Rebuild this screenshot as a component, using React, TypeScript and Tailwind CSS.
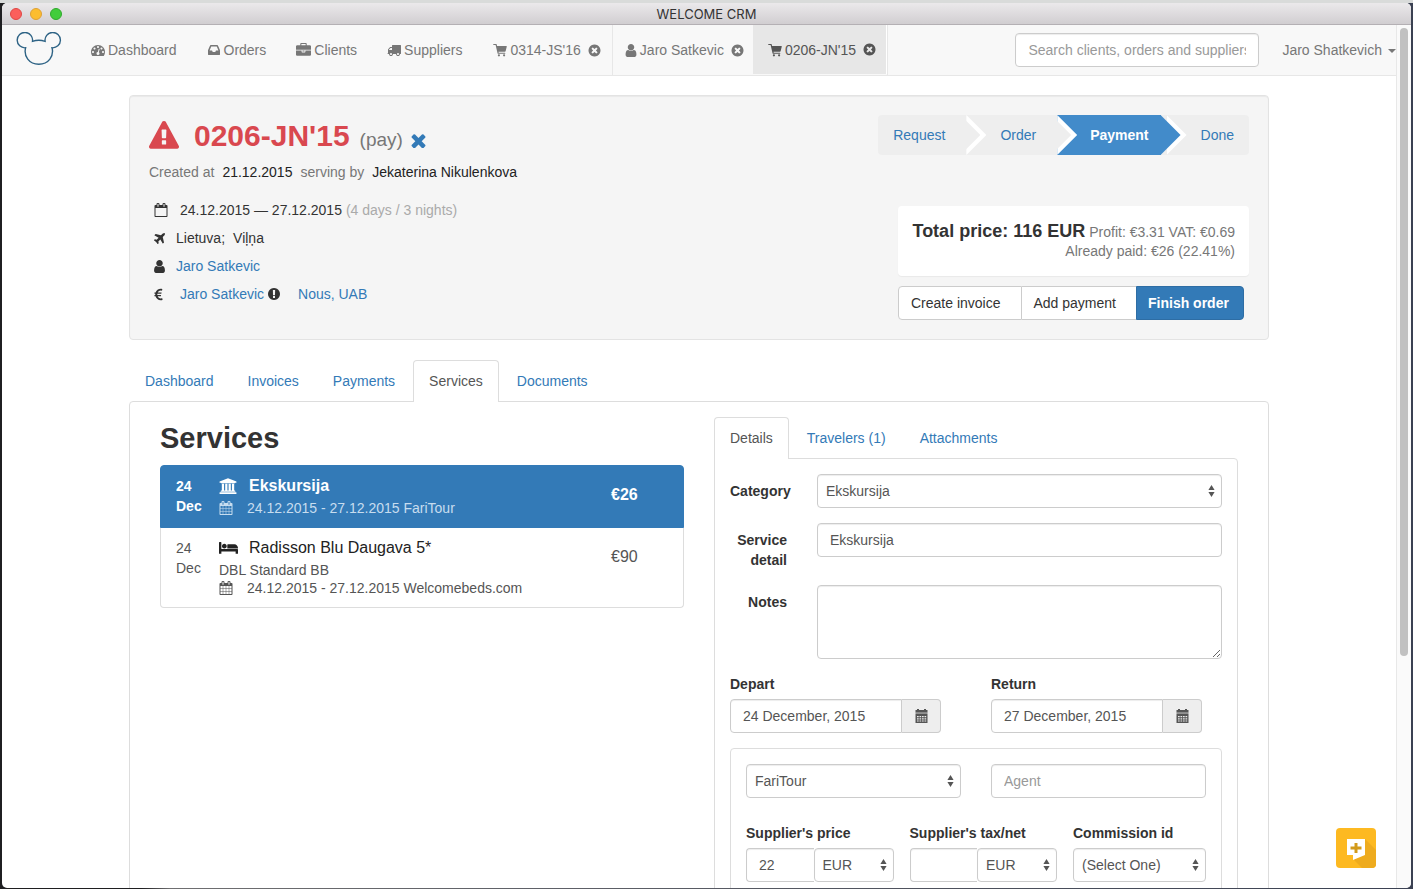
import React from "react";
import { FaEuroSign } from "react-icons/fa";

type IconProps = { className?: string };

function Glyph({ d, box, className }: { d: string; box: string; className?: string }) {
  return (
    <svg viewBox={box} className={className} fill="currentColor" aria-hidden="true">
      <path d={d} />
    </svg>
  );
}

const paths = {
  gauge:
    "M384 1152q0-53-37.5-90.5t-90.5-37.5-90.5 37.5-37.5 90.5 37.5 90.5 90.5 37.5 90.5-37.5 37.5-90.5zm192-448q0-53-37.5-90.5t-90.5-37.5-90.5 37.5-37.5 90.5 37.5 90.5 90.5 37.5 90.5-37.5 37.5-90.5zm428 481l101-382q6-26-7.5-48.5t-38.5-29.5-48 6.5-30 39.5l-101 382q-60 5-107 43.5t-63 98.5q-20 77 20 146t117 89 146-20 89-117q16-60-6-117t-72-91zm660-33q0-53-37.5-90.5t-90.5-37.5-90.5 37.5-37.5 90.5 37.5 90.5 90.5 37.5 90.5-37.5 37.5-90.5zm-640-640q0-53-37.5-90.5t-90.5-37.5-90.5 37.5-37.5 90.5 37.5 90.5 90.5 37.5 90.5-37.5 37.5-90.5zm448 192q0-53-37.5-90.5t-90.5-37.5-90.5 37.5-37.5 90.5 37.5 90.5 90.5 37.5 90.5-37.5 37.5-90.5zm320 448q0 261-141 483-19 29-54 29h-1402q-35 0-54-29-141-221-141-483 0-182 71-348t191-286 286-191 348-71 348 71 286 191 191 286 71 348z",
  inbox:
    "M1151 960h316q-1-3-2.5-8t-2.5-8l-212-496h-708l-212 496q-1 2-2.5 8t-2.5 8h316l95 192h320zm513 30v482q0 26-19 45t-45 19h-1408q-26 0-45-19t-19-45v-482q0-62 25-123l238-552q10-25 36.5-42t52.5-17h832q26 0 52.5 17t36.5 42l238 552q25 61 25 123z",
  briefcase:
    "M640 256h512v-128h-512v128zm1152 640v480q0 66-47 113t-113 47h-1472q-66 0-113-47t-47-113v-480h672v160q0 26 19 45t45 19h320q26 0 45-19t19-45v-160h672zm-768 0v128h-256v-128h256zm768-480v384h-1792v-384q0-66 47-113t113-47h352v-160q0-40 28-68t68-28h576q40 0 68 28t28 68v160h352q66 0 113 47t47 113z",
  truck:
    "M640 1408q0-52-38-90t-90-38-90 38-38 90 38 90 90 38 90-38 38-90zm-384-512h384v-256h-158q-13 0-22 9l-195 195q-9 9-9 22v30zm1280 512q0-52-38-90t-90-38-90 38-38 90 38 90 90 38 90-38 38-90zm256-1088v1024q0 15-4 26.5t-13.5 18.5-16.5 11.5-23.5 6-22.5 2-25.5 0-22.5-.5q0 106-75 181t-181 75-181-75-75-181h-384q0 106-75 181t-181 75-181-75-75-181h-64q-3 0-22.5.5t-25.5 0-22.5-2-23.5-6-16.5-11.5-13.5-18.5-4-26.5q0-26 19-45t45-19v-320q0-8-.5-35t0-38 2.5-34.5 6.5-37 14-30.5 22.5-30l198-198q19-19 50.5-32t58.5-13h160v-192q0-26 19-45t45-19h1024q26 0 45 19t19 45z",
  user:
    "M1536 1399q0 109-62.5 187t-150.5 78h-854q-88 0-150.5-78t-62.5-187q0-85 8.5-160.5t31.5-152 58.5-131 94-89 134.5-34.5q131 128 313 128t313-128q76 0 134.5 34.5t94 89 58.5 131 31.5 152 8.5 160.5zm-256-887q0 159-112.5 271.5t-271.5 112.5-271.5-112.5-112.5-271.5 112.5-271.5 271.5-112.5 271.5 112.5 112.5 271.5z",
  timesCircle:
    "M1277 1122q0-26-19-45l-181-181 181-181q19-19 19-45 0-27-19-46l-90-90q-19-19-46-19-26 0-45 19l-181 181-181-181q-19-19-45-19-27 0-46 19l-90 90q-19 19-19 46 0 26 19 45l181 181-181 181q-19 19-19 45 0 27 19 46l90 90q19 19 46 19 26 0 45-19l181-181 181 181q19 19 45 19 27 0 46-19l90-90q19-19 19-46zm387-226q0 209-103 385.5t-279.5 279.5-385.5 103-385.5-103-279.5-279.5-103-385.5 103-385.5 279.5-279.5 385.5-103 385.5 103 279.5 279.5 103 385.5z",
  calendar:
    "M192 1664h288v-288h-288v288zm352 0h320v-288h-320v288zm-352-352h288v-320h-288v320zm352 0h320v-320h-320v320zm-352-384h288v-288h-288v288zm736 736h320v-288h-320v288zm-384-736h320v-288h-320v288zm768 736h288v-288h-288v288zm-384-352h320v-320h-320v320zm-352-864v-288q0-13-9.5-22.5t-22.5-9.5h-64q-13 0-22.5 9.5t-9.5 22.5v288q0 13 9.5 22.5t22.5 9.5h64q13 0 22.5-9.5t9.5-22.5zm736 864h288v-320h-288v320zm-384-384h320v-288h-320v288zm384 0h288v-288h-288v288zm32-480v-288q0-13-9.5-22.5t-22.5-9.5h-64q-13 0-22.5 9.5t-9.5 22.5v288q0 13 9.5 22.5t22.5 9.5h64q13 0 22.5-9.5t9.5-22.5zm384-64v1280q0 52-38 90t-90 38h-1408q-52 0-90-38t-38-90v-1280q0-52 38-90t90-38h128v-96q0-66 47-113t113-47h64q66 0 113 47t47 113v96h384v-96q0-66 47-113t113-47h64q66 0 113 47t47 113v96h128q52 0 90 38t38 90z",
  calendarEmpty:
    "M192 1664h1408v-1024h-1408v1024zm384-1216v-288q0-14-9-23t-23-9h-64q-14 0-23 9t-9 23v288q0 14 9 23t23 9h64q14 0 23-9t9-23zm768 0v-288q0-14-9-23t-23-9h-64q-14 0-23 9t-9 23v288q0 14 9 23t23 9h64q14 0 23-9t9-23zm384-64v1280q0 52-38 90t-90 38h-1408q-52 0-90-38t-38-90v-1280q0-52 38-90t90-38h128v-96q0-66 47-113t113-47h64q66 0 113 47t47 113v96h384v-96q0-66 47-113t113-47h64q66 0 113 47t47 113v96h128q52 0 90 38t38 90z",
  plane:
    "M1568 160q44 52 12 148t-108 172l-161 161 160 696q5 19-12 33l-128 96q-7 6-19 6-4 0-7-1-15-3-21-16l-279-508-259 259 53 194q5 17-8 31l-96 96q-9 9-23 9h-2q-15-2-24-13l-189-252-252-189q-11-7-13-23-1-13 9-25l96-97q9-9 23-9 6 0 8 1l194 53 259-259-508-279q-14-8-17-24-2-16 9-27l128-128q14-13 30-8l665 159 160-160q76-76 172-108t148 12z",
  bank:
    "M960 128l960 384v128h-128q0 26-20.5 45t-48.5 19h-1526q-28 0-48.5-19t-20.5-45h-128v-128zm-704 640h256v768h128v-768h256v768h128v-768h256v768h128v-768h256v768h59q28 0 48.5 19t20.5 45v64h-1664v-64q0-26 20.5-45t48.5-19h59v-768zm1595 960q28 0 48.5 19t20.5 45v128h-1920v-128q0-26 20.5-45t48.5-19h1782z",
  bed:
    "M256 960h1728q26 0 45 19t19 45v448h-256v-256h-1536v256h-256v-1216q0-26 19-45t45-19h128q26 0 45 19t19 45v704zm576-320q0-106-75-181t-181-75-181 75-75 181 75 181 181 75 181-75 75-181zm1216 256v-64q0-159-112.5-271.5t-271.5-112.5h-704q-26 0-45 19t-19 45v384h1152z",
  warning:
    "M1024 1375v-190q0-14-9.5-23.5t-22.5-9.5h-192q-13 0-22.5 9.5t-9.5 23.5v190q0 14 9.5 23.5t22.5 9.5h192q13 0 22.5-9.5t9.5-23.5zm-2-374l18-459q0-12-10-19-13-11-24-11h-220q-11 0-24 11-10 7-10 21l17 457q0 10 10 16.5t24 6.5h185q14 0 23.5-6.5t10.5-16.5zm-14-934l768 1408q35 63-2 126-17 29-46.5 46t-63.5 17h-1536q-34 0-63.5-17t-46.5-46q-37-63-2-126l768-1408q17-31 47-49t65-18 65 18 47 49z",
  infoCircle:
    "M896 128q209 0 385.5 103t279.5 279.5 103 385.5-103 385.5-279.5 279.5-385.5 103-385.5-103-279.5-279.5-103-385.5 103-385.5 279.5-279.5 385.5-103zm128 1247v-190q0-14-9-23.5t-22-9.5h-192q-13 0-23 10t-10 23v190q0 13 10 23t23 10h192q13 0 22-9.5t9-23.5zm-2-344l18-621q0-12-10-18-10-8-24-8h-220q-14 0-24 8-10 6-10 18l17 621q0 10 10 17.5t24 7.5h185q14 0 23.5-7.5t10.5-17.5z",
  times:
    "M1490 1322q0 40-28 68l-136 136q-28 28-68 28t-68-28l-294-294-294 294q-28 28-68 28t-68-28l-136-136q-28-28-28-68t28-68l294-294-294-294q-28-28-28-68t28-68l136-136q28-28 68-28t68 28l294 294 294-294q28-28 68-28t68 28l136 136q28 28 28 68t-28 68l-294 294 294 294q28 28 28 68z",
};

function Cart({ className }: IconProps) {
  return (
    <svg viewBox="0 0 14 14" className={className} fill="currentColor" aria-hidden="true">
      <path d="M.6 1h2.500c.3 0 .5.2.6.4L4.100 3H13.300c.4 0 .6.300.5.600l-1.200 4.700c-.1.300-.3.500-.6.500H5.500l.2 1h6.200c.3 0 .5.200.5.500s-.2.500-.5.500H5.200c-.3 0-.5-.2-.6-.4L2.600 2H.6C.3 2 .1 1.800.1 1.500S.3 1 .6 1z" />
      <circle cx="5.900" cy="12.300" r="1.100" />
      <circle cx="11.100" cy="12.300" r="1.100" />
    </svg>
  );
}

function GridCalendar({ className }: IconProps) {
  return (
    <svg viewBox="0 0 13 14" className={className} fill="currentColor" aria-hidden="true">
      <path d="M2 0h2v1h5V0h2v1h1.500v2.500H.5V1H2z" />
      <path opacity=".6" d="M.5 3.500h12V5H.5z" />
      <path
        fillRule="evenodd"
        d="M.5 5h12v9H.5zM2 7v1.200h1.700V7zm2.500 0v1.200h1.700V7zm2.500 0v1.200h1.700V7zm2.500 0v1.200h1.700V7zM2 9.200v1.200h1.700V9.200zm2.500 0v1.200h1.700V9.200zm2.500 0v1.200h1.700V9.200zm2.500 0v1.200h1.700V9.200zM2 11.400v1.200h1.700v-1.200zm2.500 0v1.200h1.700v-1.200zm2.500 0v1.200h1.700v-1.200zm2.500 0v1.200h1.700v-1.200z"
      />
    </svg>
  );
}

function Logo() {
  return (
    <svg viewBox="0 0 46 34" className="h-[34px] w-[46px]" fill="none" stroke="#2e6385" strokeWidth="1.400" aria-hidden="true">
      <path d="M16.500 9.300A7.700 7.700 0 1 0 9.600 15.800C7.500 24 13 32.300 22.800 32.300S38.200 24 36 15.800A7.700 7.700 0 1 0 29.100 9.300Q22.800 7.300 16.500 9.300z" />
    </svg>
  );
}

function TitleBar() {
  return (
    <header className="flex h-[22px] shrink-0 items-center rounded-t-[5px] border-b border-[#b4b0b4] bg-gradient-to-b from-[#ebe9eb] to-[#d1ced1] px-2">
      <div className="flex flex-1 gap-2">
        <button aria-label="Close window" className="size-3 rounded-full border border-[#df4744] bg-[#fb5f5c]" />
        <button aria-label="Minimise window" className="size-3 rounded-full border border-[#dea035] bg-[#fcbd2f]" />
        <button aria-label="Zoom window" className="size-3 rounded-full border border-[#2fa92c] bg-[#41cd3b]" />
      </div>
      <h1 className="font-['Inter','Liberation_Sans',sans-serif] text-[13px] leading-5 text-[#333]">WELCOME CRM</h1>
      <div className="flex-1" />
    </header>
  );
}

const sections = [
  { label: "Dashboard", d: paths.gauge, size: "h-[14px] w-[14px]" },
  { label: "Orders", d: paths.inbox, size: "h-[14px] w-[14px]" },
  { label: "Clients", d: paths.briefcase, size: "h-[15px] w-[15px]" },
  { label: "Suppliers", d: paths.truck, size: "h-[14px] w-[14px]" },
];

function OpenTab({ label, icon, active }: { label: string; icon: "cart" | "user"; active?: boolean }) {
  return (
    <li
      className={
        active
          ? "flex h-[49px] items-center border-r border-white bg-[#e7e7e7] pr-[10px] pl-[15px] text-[#555]"
          : icon === "cart"
            ? "flex h-[50px] items-center border-r border-[#e7e7e7] pr-[11px] pl-4"
            : "flex h-[50px] items-center pr-[9px] pl-3"
      }
    >
      <a href="#" className="flex items-center gap-[3px]">
        {icon === "cart" ? (
          <Cart className="size-[14px]" />
        ) : (
          <Glyph d={paths.user} box="256 128 1280 1536" className="h-[13px] w-3" />
        )}
        <span>{label}</span>
      </a>
      <button aria-label={`Close ${label}`} className="ml-[7px]">
        <Glyph d={paths.timesCircle} box="64 64 1664 1664" className="size-[13px]" />
      </button>
    </li>
  );
}

function NavBar() {
  return (
    <nav className="flex h-[51px] shrink-0 border-b border-[#e7e7e7] bg-[#f8f8f8] pl-[14px] text-[#777]">
      <a href="#" aria-label="Home" className="mr-[14px] pt-[7px]">
        <Logo />
      </a>
      <ul className="flex h-[50px]">
        {sections.map((s) => (
          <li key={s.label}>
            <a href="#" className="flex h-[50px] items-center gap-[3px] px-[15px]">
              <Glyph d={s.d} box="0 0 1792 1792" className={s.size} />
              <span>{s.label}</span>
            </a>
          </li>
        ))}
        <OpenTab label="0314-JS'16" icon="cart" />
        <OpenTab label="Jaro Satkevic" icon="user" />
        <OpenTab label="0206-JN'15" icon="cart" active />
        <li className="border-l border-[#e7e7e7]" aria-hidden="true" />
      </ul>
      <div className="ml-auto flex items-center">
        <input
          aria-label="Search"
          placeholder="Search clients, orders and suppliers"
          className="h-[34px] w-[244px] rounded border border-[#ccc] bg-white px-3 text-sm shadow-[inset_0_1px_1px_rgba(0,0,0,0.075)] placeholder:text-[#999]"
        />
        <button className="ml-[23px] flex items-center gap-1.5">
          Jaro Shatkevich
          <span className="mt-0.5 border-x-4 border-t-4 border-x-transparent border-t-[#777]" />
        </button>
      </div>
    </nav>
  );
}

function Step({ label, kind }: { label: string; kind: "first" | "middle" | "active" | "last" }) {
  const spacing = {
    first: "rounded-l pl-[15px] pr-[21px]",
    middle: "pl-[34px] pr-[21px]",
    active: "pl-[33px] pr-[18px] text-white font-bold",
    last: "rounded-r pl-[34px] pr-[15px]",
  }[kind];
  return (
    <li className={`relative flex h-10 items-center bg-[#eee] ${spacing}`}>
      {kind === "active" && <span className="absolute inset-y-0 left-0 right-1.5 bg-[#428bca]" />}
      {kind !== "last" && (
        <>
          <span className="absolute inset-y-0 left-full z-10 w-5 bg-white [clip-path:polygon(0_0,100%_50%,0_100%)]" />
          <span
            className={`absolute inset-y-0 -right-[14px] z-20 w-5 [clip-path:polygon(0_0,100%_50%,0_100%)] ${
              kind === "active" ? "bg-[#428bca]" : "bg-[#eee]"
            }`}
          />
        </>
      )}
      <a href="#" className="relative z-30">
        {label}
      </a>
    </li>
  );
}

function OrderHeader() {
  return (
    <section className="mt-[19px] flex justify-between rounded border border-[#e3e3e3] bg-[#f5f5f5] p-[19px] shadow-[inset_0_1px_1px_rgba(0,0,0,0.05)]">
      <div>
        <h2 className="flex h-[42px] items-center">
          <Glyph d={paths.warning} box="0 0 1792 1792" className="mr-[15px] size-[30px] text-[#d9484f]" />
          <span className="text-[30px] font-bold text-[#d9484f]">0206-JN'15</span>
          <span className="mt-2 ml-[10px] text-[19px] text-[#777]">(pay)</span>
          <button aria-label="Remove status" className="mt-2 ml-2 text-[#337ab7]">
            <Glyph d={paths.times} box="256 256 1280 1280" className="size-[15px]" />
          </button>
        </h2>
        <p className="mt-[5px] flex gap-2 leading-5 text-[#777]">
          Created at <span className="text-[#222]">21.12.2015</span> serving by{" "}
          <span className="text-[#222]">Jekaterina Nikulenkova</span>
        </p>
        <ul className="mt-[14px] pb-3 pl-[5px] leading-7 text-[#333]">
          <li className="flex items-center">
            <Glyph d={paths.calendarEmpty} box="0 0 1792 1792" className="mr-3 size-[14px]" />
            24.12.2015 — 27.12.2015 <span className="ml-1 text-[#aaa]">(4 days / 3 nights)</span>
          </li>
          <li className="flex items-center">
            <Glyph d={paths.plane} box="192 128 1408 1408" className="mr-[11px] size-[11px]" />
            Lietuva;<span className="ml-2">Viļņa</span>
          </li>
          <li className="flex items-center">
            <Glyph d={paths.user} box="256 128 1280 1536" className="mr-[11px] h-[13px] w-[11px]" />
            <a href="#" className="text-[#337ab7]">Jaro Satkevic</a>
          </li>
          <li className="flex items-center">
            <FaEuroSign className="mr-[17px] h-[13px] w-[9px]" />
            <a href="#" className="text-[#337ab7]">Jaro Satkevic</a>
            <Glyph d={paths.infoCircle} box="128 128 1536 1536" className="ml-1 size-3" />
            <a href="#" className="ml-[18px] text-[#337ab7]">Nous, UAB</a>
          </li>
        </ul>
      </div>
      <div className="flex flex-col">
        <ol className="flex self-end text-[#337ab7]">
          <Step label="Request" kind="first" />
          <Step label="Order" kind="middle" />
          <Step label="Payment" kind="active" />
          <Step label="Done" kind="last" />
        </ol>
        <div className="mt-auto w-[351px] self-end">
          <div className="rounded bg-white px-[14px] py-[15px] text-right leading-5 whitespace-nowrap text-[#777] shadow-[0_1px_1px_rgba(0,0,0,0.05)]">
            <p className="flex h-5 items-baseline justify-end gap-1">
              <strong className="text-lg leading-5 font-bold text-[#333]">Total price: 116 EUR</strong>
              <span>Profit: €3.31 VAT: €0.69</span>
            </p>
            <p>Already paid: €26 (22.41%)</p>
          </div>
          <div className="mt-[10px] flex h-[34px] text-[#333]">
            <button className="rounded-l border border-[#ccc] bg-white pr-5 pl-3">Create invoice</button>
            <button className="border-y border-[#ccc] bg-white pr-5 pl-3">Add payment</button>
            <button className="rounded-r border border-[#2e6da4] bg-[#337ab7] pr-[14px] pl-[11px] font-bold text-white">
              Finish order
            </button>
          </div>
        </div>
      </div>
    </section>
  );
}

function Tabs({ items, current }: { items: string[]; current: string }) {
  return (
    <ul className="relative flex gap-0.5">
      {items.map((item) => (
        <li key={item}>
          <a
            href="#"
            className={
              item === current
                ? "-mb-px block rounded-t border border-b-0 border-[#ddd] bg-white px-[15px] pt-[10px] pb-[11px] leading-5 text-[#555]"
                : "-mb-px block border border-transparent px-[15px] py-[10px] leading-5 text-[#337ab7]"
            }
          >
            {item}
          </a>
        </li>
      ))}
    </ul>
  );
}

function ServiceList() {
  return (
    <ul>
      <li className="flex rounded-t border border-[#337ab7] bg-[#337ab7] px-[15px] py-[10px] text-white">
        <div className="w-[43px] shrink-0 leading-5 font-bold">
          24
          <br />
          Dec
        </div>
        <div className="flex-1">
          <h3 className="flex items-center text-base leading-5 font-bold">
            <Glyph d={paths.bank} box="0 0 1920 2048" className="mr-3 h-[18px] w-[18px]" />
            Ekskursija
          </h3>
          <p className="mt-[3px] flex items-center leading-[18px] text-[#c7ddef]">
            <Glyph d={paths.calendar} box="0 0 1792 1792" className="mr-[14px] size-[14px]" />
            24.12.2015 - 27.12.2015 FariTour
          </p>
        </div>
        <div className="w-[57px] pt-[9px] text-base leading-5 font-bold">€26</div>
      </li>
      <li className="flex rounded-b border border-t-0 border-[#ddd] px-[15px] py-[10px] text-[#555]">
        <div className="w-[43px] shrink-0 leading-5">
          24
          <br />
          Dec
        </div>
        <div className="flex-1">
          <h3 className="flex items-center text-base leading-5 text-[#222]">
            <Glyph d={paths.bed} box="0 0 2048 1792" className="mr-[11px] h-[17px] w-[19px]" />
            Radisson Blu Daugava 5*
          </h3>
          <p className="mt-[3px] leading-[18px]">DBL Standard BB</p>
          <p className="flex items-center leading-[18px]">
            <Glyph d={paths.calendar} box="0 0 1792 1792" className="mr-[14px] size-[14px]" />
            24.12.2015 - 27.12.2015 Welcomebeds.com
          </p>
        </div>
        <div className="w-[57px] pt-[9px] text-base leading-5">€90</div>
      </li>
    </ul>
  );
}

const field =
  "h-[34px] w-full border border-[#ccc] bg-white text-sm text-[#555] shadow-[inset_0_1px_1px_rgba(0,0,0,0.075)] placeholder:text-[#999]";

function Select({ id, label, value, className }: { id: string; label?: string; value: string; className?: string }) {
  return (
    <div className={`relative ${className ?? ""}`}>
      <select id={id} aria-label={label} defaultValue={value} className={`${field} appearance-none rounded pl-2`}>
        <option>{value}</option>
      </select>
      <svg viewBox="0 0 7 12" className="pointer-events-none absolute top-[11px] right-[7px] h-3 w-[7px]" fill="#555" aria-hidden="true">
        <path d="M3.500 0 6.600 5H.4zM3.500 12 .4 7h6.200z" />
      </svg>
    </div>
  );
}

function DateField({ id, label, value }: { id: string; label: string; value: string }) {
  return (
    <div className="pr-5">
      <label htmlFor={id} className="mb-[5px] block leading-5 font-bold">
        {label}
      </label>
      <div className="flex">
        <input id={id} defaultValue={value} className={`${field} min-w-0 flex-1 rounded-l px-3`} />
        <button
          type="button"
          aria-label={`Pick ${label.toLowerCase()} date`}
          className="flex h-[34px] w-[39px] items-center justify-center rounded-r border border-l-0 border-[#ccc] bg-[#eee] text-[#555]"
        >
          <GridCalendar className="h-[14px] w-[13px]" />
        </button>
      </div>
    </div>
  );
}

function DetailsForm() {
  return (
    <form className="rounded-tr border border-[#ddd] p-[15px] text-[#333]">
      <div className="grid grid-cols-[57px_1fr] gap-x-[30px] gap-y-[15px]">
        <label htmlFor="category" className="pt-[7px] leading-5 font-bold">
          Category
        </label>
        <Select id="category" value="Ekskursija" />
        <label htmlFor="detail" className="pt-[7px] text-right leading-5 font-bold">
          Service detail
        </label>
        <input id="detail" defaultValue="Ekskursija" className={`${field} rounded px-3`} />
        <label htmlFor="notes" className="pt-[7px] text-right leading-5 font-bold">
          Notes
        </label>
        <textarea
          id="notes"
          className="block h-[74px] w-full rounded border border-[#ccc] px-3 py-1.5 shadow-[inset_0_1px_1px_rgba(0,0,0,0.075)]"
        />
      </div>
      <div className="mt-[15px] grid grid-cols-2 gap-[30px]">
        <DateField id="depart" label="Depart" value="24 December, 2015" />
        <DateField id="return" label="Return" value="27 December, 2015" />
      </div>
      <fieldset className="mt-[15px] rounded border border-[#ddd] p-[15px]">
        <div className="grid grid-cols-2 gap-[30px]">
          <Select id="supplier" label="Supplier" value="FariTour" />
          <input aria-label="Agent" placeholder="Agent" className={`${field} rounded px-3`} />
        </div>
        <div className="mt-[25px] flex gap-4">
          <div className="flex-1">
            <label htmlFor="price" className="mb-[5px] block leading-5 font-bold">
              Supplier's price
            </label>
            <div className="flex">
              <input id="price" defaultValue="22" className={`${field} min-w-0 flex-1 rounded-l border-r-0 px-3`} />
              <Select id="price-currency" label="Price currency" value="EUR" className="w-20" />
            </div>
          </div>
          <div className="flex-1">
            <label htmlFor="tax" className="mb-[5px] block leading-5 font-bold">
              Supplier's tax/net
            </label>
            <div className="flex">
              <input id="tax" className={`${field} min-w-0 flex-1 rounded-l border-r-0 px-3`} />
              <Select id="tax-currency" label="Tax currency" value="EUR" className="w-20" />
            </div>
          </div>
          <div className="w-[133px]">
            <label htmlFor="commission" className="mb-[5px] block leading-5 font-bold">
              Commission id
            </label>
            <Select id="commission" value="(Select One)" />
          </div>
        </div>
      </fieldset>
    </form>
  );
}

function FeedbackButton() {
  return (
    <button aria-label="Leave feedback" className="absolute right-[35px] bottom-5 size-10 overflow-hidden rounded-sm bg-[#fdb921]">
      <svg viewBox="0 0 40 40" className="size-10" aria-hidden="true">
        <path d="M29 11 40 22v18H26l-9-9z" fill="#eeab1e" />
        <path d="M11 11h18v16l-12 5v-5h-6z" fill="#fff" />
        <path d="M18.500 15h3v3.500h4v3h-4V25h-3v-3.500h-4v-3h4z" fill="#d29a1b" />
      </svg>
    </button>
  );
}

export default function App() {
  return (
    <div className="h-screen overflow-hidden bg-gradient-to-r from-[#1f1f21] from-10% via-[#6f6f71] via-12% to-[#3b4152] px-0.5 pb-px font-['Liberation_Sans',Arial,sans-serif] text-sm">
      <div className="-mx-0.5 h-[3px] bg-[#d9dbda]" />
      <div className="relative flex h-[calc(100%-3px)] flex-col overflow-hidden rounded-[5px] bg-white">
        <TitleBar />
        <div className="flex min-h-0 flex-1">
          <div className="min-w-0 flex-1 overflow-y-auto [scrollbar-width:none]">
            <NavBar />
            <main className="mx-auto w-full max-w-[1170px] px-[15px]">
              <OrderHeader />
              <div className="mt-5">
                <Tabs items={["Dashboard", "Invoices", "Payments", "Services", "Documents"]} current="Services" />
                <div className="grid grid-cols-2 gap-[30px] rounded-t border border-[#ddd] px-[30px] py-[15px]">
                  <section>
                    <h2 className="mt-1 mb-[10px] text-[29px] leading-[34px] font-bold text-[#333]">Services</h2>
                    <ServiceList />
                  </section>
                  <section>
                    <Tabs items={["Details", "Travelers (1)", "Attachments"]} current="Details" />
                    <DetailsForm />
                  </section>
                </div>
              </div>
            </main>
          </div>
          <div className="w-[15px] shrink-0 border-l border-[#e8e8e8] bg-[#fafafa] px-[3px] pt-[3px]" aria-hidden="true">
            <div className="h-[73%] w-2 rounded-full bg-[#c1c1c1]" />
          </div>
        </div>
        <FeedbackButton />
      </div>
    </div>
  );
}
